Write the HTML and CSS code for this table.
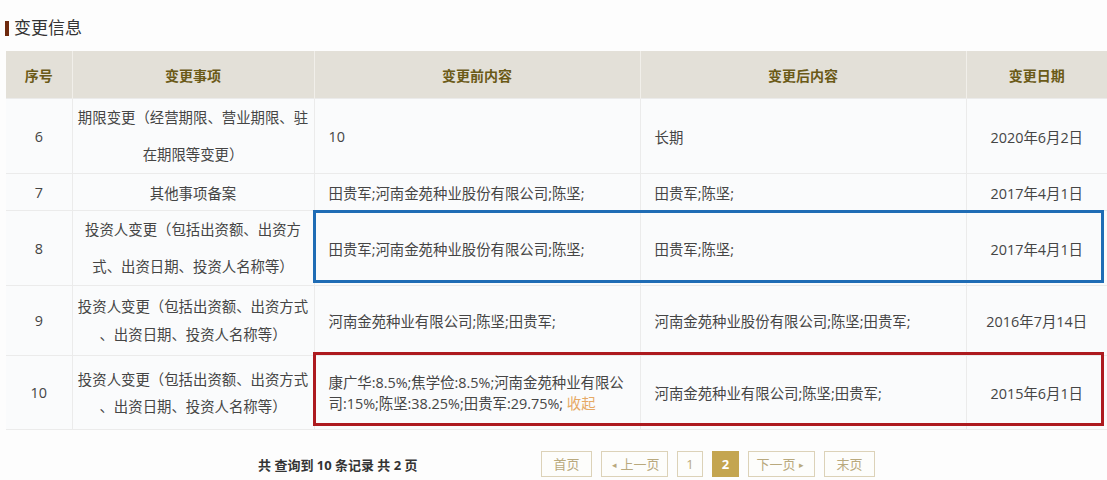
FILE: index.html
```html
<!DOCTYPE html>
<html lang="zh-CN">
<head>
<meta charset="utf-8">
<title>变更信息</title>
<link rel="stylesheet" href="styles.css">
</head>
<body>
<div class="page">
  <h2 class="title">变更信息</h2>
  <div class="table-wrap">
    <table class="change-table">
      <colgroup>
        <col class="c-no">
        <col class="c-item">
        <col class="c-before">
        <col class="c-after">
        <col class="c-date">
      </colgroup>
      <thead>
        <tr>
          <th>序号</th>
          <th>变更事项</th>
          <th>变更前内容</th>
          <th>变更后内容</th>
          <th>变更日期</th>
        </tr>
      </thead>
      <tbody>
        <tr class="r-tall">
          <td class="num">6</td>
          <td class="item">期限变更（经营期限、营业期限、驻<br>在期限等变更）</td>
          <td class="txt">10</td>
          <td class="txt">长期</td>
          <td class="date">2020年6月2日</td>
        </tr>
        <tr class="r-short">
          <td class="num">7</td>
          <td class="item">其他事项备案</td>
          <td class="txt">田贵军;河南金苑种业股份有限公司;陈坚;</td>
          <td class="txt">田贵军;陈坚;</td>
          <td class="date">2017年4月1日</td>
        </tr>
        <tr class="r-tall">
          <td class="num">8</td>
          <td class="item">投资人变更（包括出资额、出资方<br>式、出资日期、投资人名称等）</td>
          <td class="txt">田贵军;河南金苑种业股份有限公司;陈坚;</td>
          <td class="txt">田贵军;陈坚;</td>
          <td class="date">2017年4月1日</td>
        </tr>
        <tr class="r-mid">
          <td class="num">9</td>
          <td class="item">投资人变更（包括出资额、出资方式<br>、出资日期、投资人名称等）</td>
          <td class="txt">河南金苑种业有限公司;陈坚;田贵军;</td>
          <td class="txt">河南金苑种业股份有限公司;陈坚;田贵军;</td>
          <td class="date">2016年7月14日</td>
        </tr>
        <tr class="r-last">
          <td class="num">10</td>
          <td class="item">投资人变更（包括出资额、出资方式<br>、出资日期、投资人名称等）</td>
          <td class="txt compact">康广华:8.5%;焦学俭:8.5%;河南金苑种业有限公<br>司:15%;陈坚:38.25%;田贵军:29.75%; <a class="fold" href="#">收起</a></td>
          <td class="txt">河南金苑种业有限公司;陈坚;田贵军;</td>
          <td class="date">2015年6月1日</td>
        </tr>
      </tbody>
    </table>
    <div class="mark mark-blue"></div>
    <div class="mark mark-red"></div>
  </div>
  <div class="pager">
    <div class="pager-info">共 查询到 10 条记录 共 2 页</div>
    <div class="pager-btns">
      <a class="pbtn w-edge" href="#">首页</a>
      <a class="pbtn w-step" href="#"><span class="tri">◂</span>上一页</a>
      <a class="pbtn w-num" href="#">1</a>
      <a class="pbtn w-num active" href="#">2</a>
      <a class="pbtn w-step" href="#">下一页<span class="tri">▸</span></a>
      <a class="pbtn w-edge" href="#">末页</a>
    </div>
  </div>
</div>
</body>
</html>
```

FILE: styles.css
```css
html, body {
  margin: 0;
  padding: 0;
  background: #fdfdfd;
}
body {
  font-family: "Open Sans", "Noto Sans CJK SC", sans-serif;
  color: #454545;
  width: 1107px;
  overflow: hidden;
}
.page {
  padding: 17px 0 0 6px;
}
.title {
  margin: 0;
  height: 22px;
  display: flex;
  align-items: center;
  font-size: 17px;
  font-weight: normal;
  color: #333;
  line-height: 22px;
}
.title::before {
  content: "";
  display: inline-block;
  width: 4px;
  height: 15px;
  background: #6e2a0e;
  margin: 0 5px 0 -1px;
}
.table-wrap {
  position: relative;
  margin-top: 12px;
  width: 1101px;
}
.change-table {
  width: 1101px;
  table-layout: fixed;
  border-collapse: collapse;
  font-size: 14.4px;
}
.c-no { width: 66px; }
.c-item { width: 242px; }
.c-before { width: 326px; }
.c-after { width: 326px; }
.c-date { width: 141px; }
.change-table th {
  height: 47px;
  background: #e3e0d8;
  color: #6b5a17;
  font-weight: bold;
  font-size: 14px;
  border-left: 1px solid #f1efea;
  padding: 0;
}
.change-table th:first-child { border-left: 0; }
.change-table td {
  border: 1px solid #ebebeb;
  background: #fafbfc;
  padding: 0;
  vertical-align: middle;
}
.change-table td:first-child { border-left: 0; }
.change-table td:last-child { border-right: 0; }
.num { text-align: center; }
.item { text-align: center; }
.txt { text-align: left; padding-left: 14px !important; }
.date { text-align: center; }
.r-tall { height: 74px; }
.r-tall .item { line-height: 37px; }
.r-short { height: 37px; }
.r-mid { height: 70px; }
.r-mid .item { line-height: 28px; }
.r-last { height: 74px; }
.r-last .item { line-height: 27px; }
.compact { line-height: 21px; }
.fold {
  color: #e6a965;
  text-decoration: none;
}
.mark {
  position: absolute;
  left: 307px;
  width: 791px;
  box-sizing: border-box;
  border: 3px solid #1f6cb5;
}
.mark-blue {
  top: 159px;
  height: 73px;
  border-color: #1f6cb5;
}
.mark-red {
  top: 301px;
  height: 74px;
  border-color: #ad1a1f;
}
.pager {
  display: flex;
  align-items: center;
  margin-top: 21px;
  height: 26px;
}
.pager-info {
  margin-left: 252px;
  width: 283px;
  font-size: 13px;
  font-weight: bold;
  color: #333;
}
.pager-btns {
  display: flex;
  gap: 9px;
}
.pbtn {
  box-sizing: border-box;
  height: 26px;
  line-height: 24px;
  border: 1px solid #dcd2b8;
  background: #fdfdfb;
  color: #b9a97d;
  font-size: 13px;
  text-align: center;
  text-decoration: none;
}
.w-edge { width: 51px; }
.w-step { width: 67px; }
.w-num { width: 26px; }
.pbtn.active {
  width: 27px;
  background: #c4a550;
  border-color: #c4a550;
  color: #fff;
  font-weight: bold;
}
.tri {
  font-size: 9px;
  margin: 0 3px;
  vertical-align: 1px;
}
```
